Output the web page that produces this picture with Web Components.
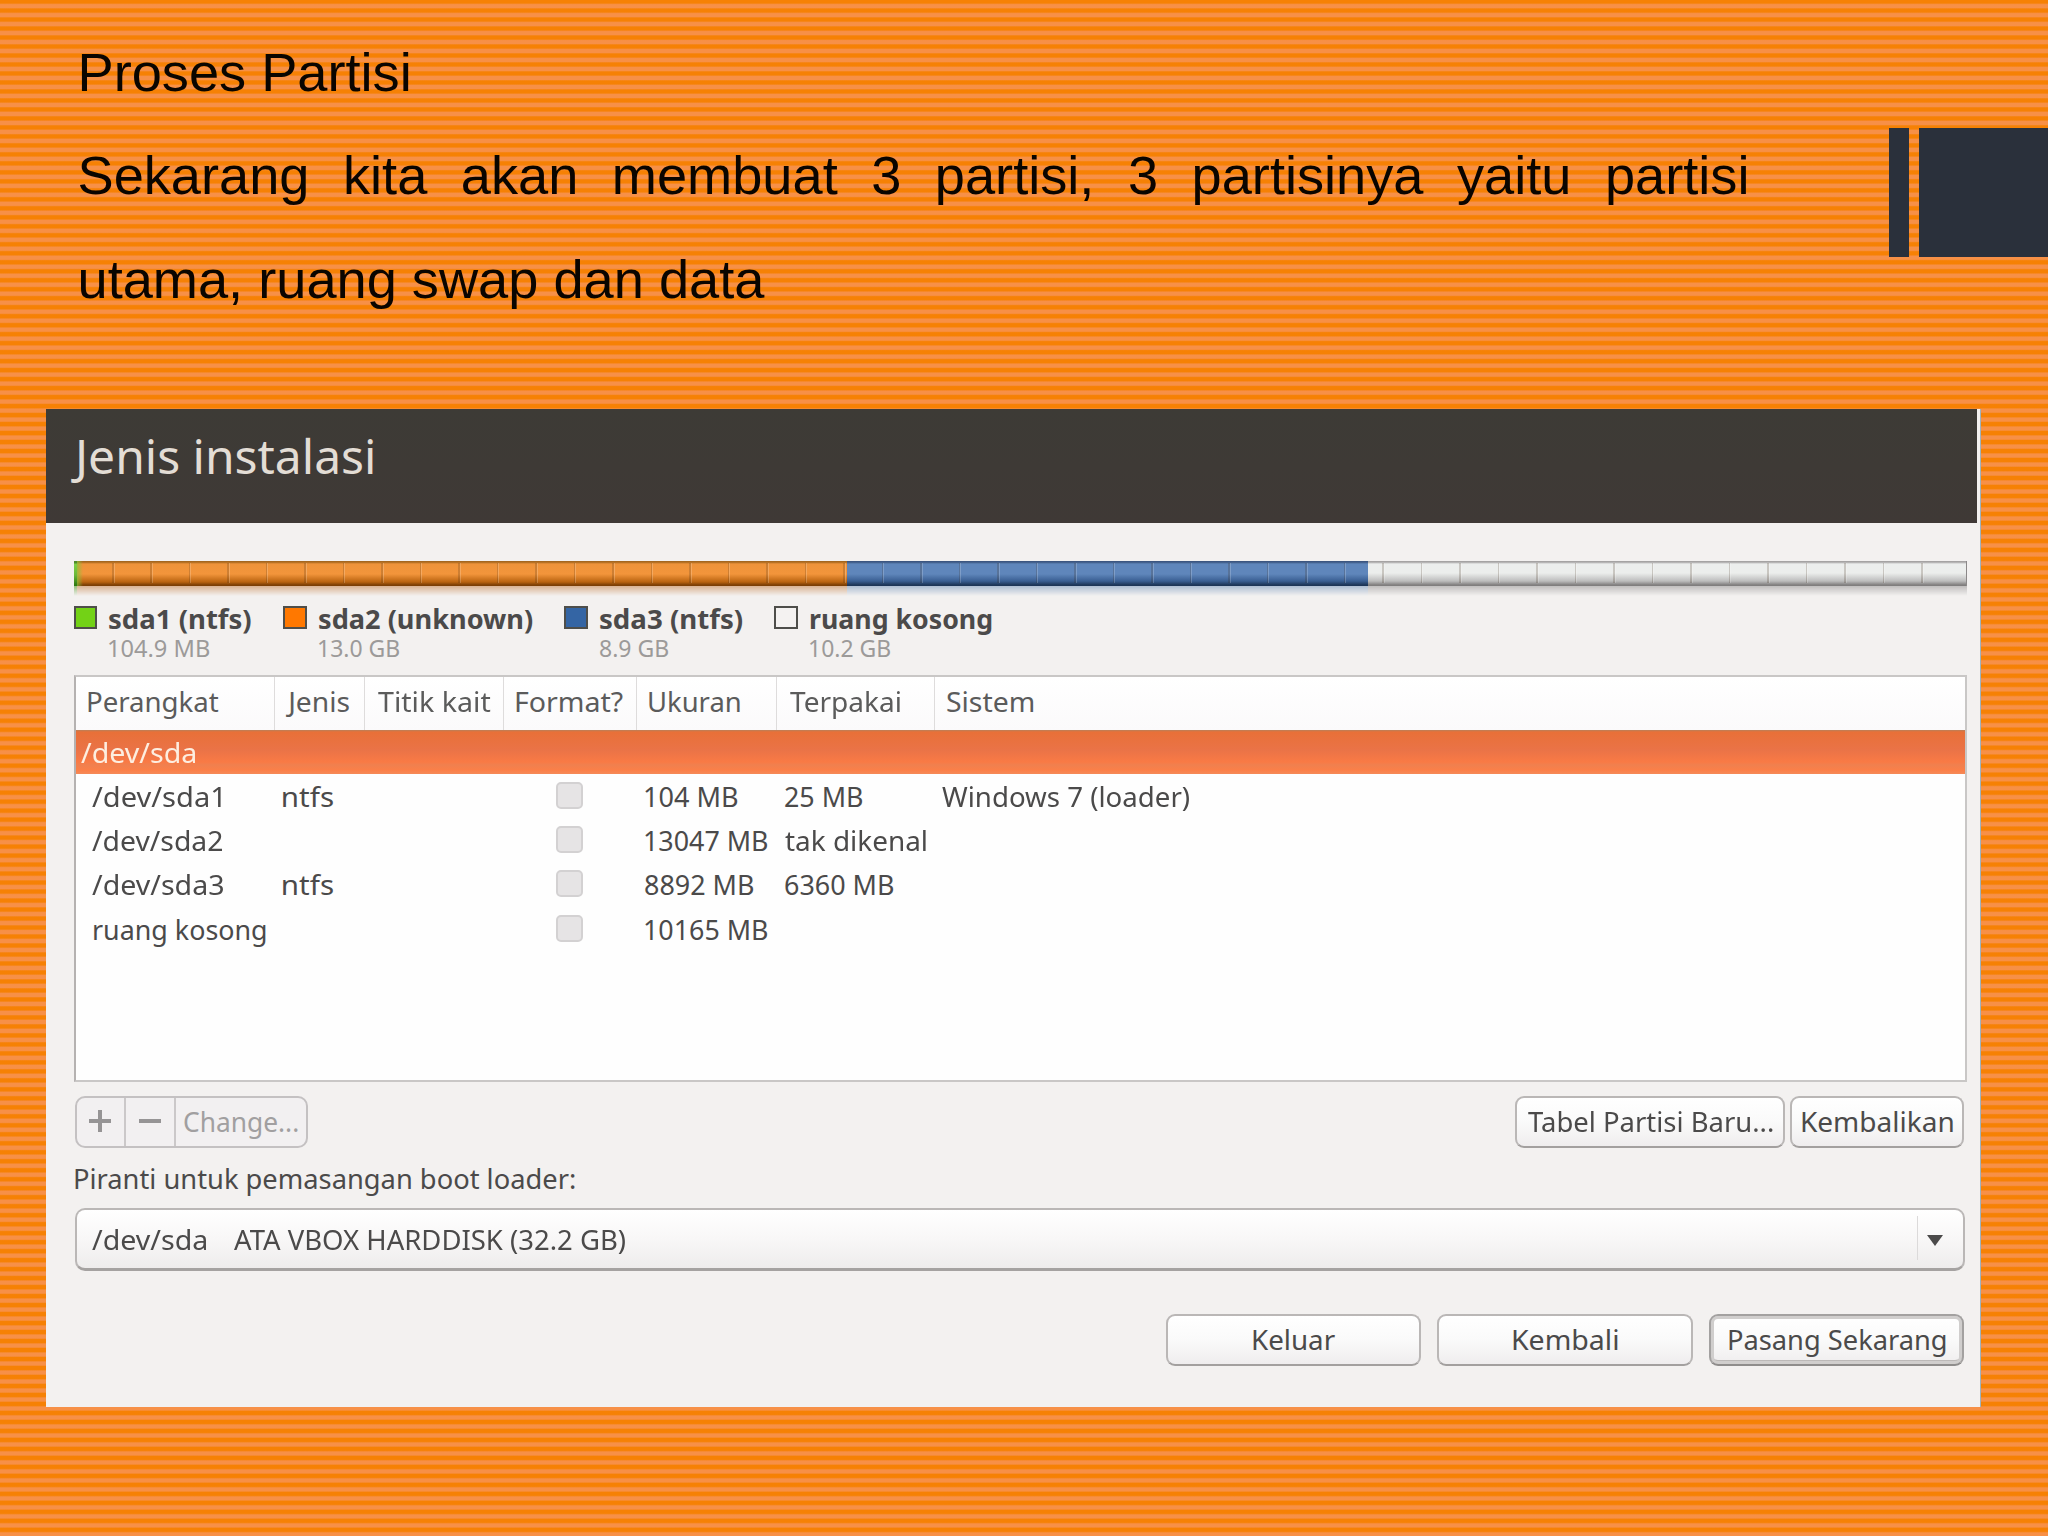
<!DOCTYPE html>
<html lang="id">
<head>
<meta charset="utf-8">
<title>Proses Partisi</title>
<style>
  html, body {
    margin: 0;
    height: 100%;
    overflow: hidden;
  }
</style>
</head>
<body>
<slide-page>
  <slide-text slot="text">
    <p>Proses Partisi</p>
    <p>Sekarang kita akan membuat 3 partisi, 3 partisinya yaitu partisi utama, ruang swap dan data</p>
  </slide-text>
  <installer-window></installer-window>
</slide-page>

<script>
class SlidePage extends HTMLElement {
  connectedCallback() {
    this.attachShadow({ mode: "open" }).innerHTML = `
      <style>
        :host {
          display: flex;
          flex-direction: column;
          box-sizing: border-box;
          width: 2048px;
          height: 1536px;
          overflow: hidden;
          background: repeating-linear-gradient(#f68104 0, #f68104 3px, #f79047 4.6px, #f79047 7.6px, #f68104 8.99px);
        }
        header {
          display: flex;
          justify-content: space-between;
          height: 409px;
        }
        .marks {
          display: flex;
          gap: 10px;
          margin-top: 128px;
          height: 128.5px;
        }
        .marks i { background: #2a303b; }
        .marks i:first-child { width: 20px; }
        .marks i:last-child { width: 129px; }
      </style>
      <header>
        <slot name="text"></slot>
        <div class="marks"><i></i><i></i></div>
      </header>
      <slot></slot>
    `;
  }
}

class SlideText extends HTMLElement {
  connectedCallback() {
    this.attachShadow({ mode: "open" }).innerHTML = `
      <style>
        :host {
          display: block;
          width: 1672px;
          margin-left: 77.5px;
          padding-top: 20.5px;
          font: 54.2px/103.6px "Liberation Sans", Arial, sans-serif;
          color: #0a0500;
          text-align: justify;
        }
        ::slotted(p) { margin: 0; }
      </style>
      <slot></slot>
    `;
  }
}

// One line of text, stretched so that its ink is exactly w pixels wide
class FitText extends HTMLElement {
  connectedCallback() {
    const w = Number(this.getAttribute("w"));
    this.attachShadow({ mode: "open" }).innerHTML = `
      <style>
        :host {
          display: block;
          flex: none;
          width: ${w}px;
          white-space: nowrap;
        }
        span {
          display: inline-block;
          transform-origin: 0 50%;
        }
      </style>
      <span><slot></slot></span>
    `;
    const cs = getComputedStyle(this);
    const ctx = document.createElement("canvas").getContext("2d");
    ctx.font = `${cs.fontWeight} ${cs.fontSize} ${cs.fontFamily}`;
    const m = ctx.measureText(this.textContent);
    const scale = w / (m.actualBoundingBoxLeft + m.actualBoundingBoxRight);
    this.shadowRoot.querySelector("span").style.transform =
      `translateX(${m.actualBoundingBoxLeft * scale}px) scaleX(${scale})`;
  }
}

class DiskBar extends HTMLElement {
  connectedCallback() {
    this.attachShadow({ mode: "open" }).innerHTML = `
      <style>
        :host {
          display: block;
          width: 1893px;
          height: 35px;
        }
        .bar, .glow {
          display: flex;
        }
        .bar {
          position: relative;
          height: 25px;
        }
        .glow {
          height: 10px;
          opacity: .6;
          -webkit-mask: linear-gradient(#000, transparent);
          mask: linear-gradient(#000, transparent);
        }
        i { box-sizing: border-box; }
        .a { width: 3px; }
        .b { width: 770px; }
        .c { width: 521.5px; }
        .d { flex: 1; }
        .bar .a { background: linear-gradient(#4f8a2c 2px, #7ed046 3px, #6cb83a 14px, #2f7a12 24px); }
        .bar .b { background: linear-gradient(90deg, rgba(126,200,60,.7), transparent 6px), linear-gradient(#a5671f 1px, #ee933a 3px, #f2953b 13px, #b9630f 21px, #7c3f05 24px); }
        .bar .c { background: linear-gradient(#3c5680 1px, #5f86bb 3px, #5f86bb 13px, #3a5f93 20px, #1d3557 24px); }
        .bar .d {
          background: linear-gradient(#a5a3a3 1px, #eceeed 3px, #eceeec 12px, #bdbdbd 20px, #807e7e 24px);
          border-right: 1.5px solid #8b8888;
        }
        .glow .a { background: #5aa032; }
        .glow .b { background: #c98b55; }
        .glow .c { background: #7f9cc0; }
        .glow .d { background: #a09e9e; }
        .ticks {
          position: absolute;
          inset: 2px 12px 3px 38.5px;
          background: repeating-linear-gradient(90deg, rgba(60,40,20,.2) 0 1.5px, rgba(255,255,255,.2) 1.5px 2.5px, transparent 2.5px 38.49px);
        }
      </style>
      <div class="bar"><i class="a"></i><i class="b"></i><i class="c"></i><i class="d"></i><div class="ticks"></div></div>
      <div class="glow"><i class="a"></i><i class="b"></i><i class="c"></i><i class="d"></i></div>
    `;
  }
}

class DiskLegend extends HTMLElement {
  connectedCallback() {
    this.attachShadow({ mode: "open" }).innerHTML = `
      <style>
        :host {
          display: flex;
          box-sizing: border-box;
          flex: none;
          width: ${this.getAttribute("span")}px;
        }
        i {
          box-sizing: border-box;
          width: 23.5px;
          height: 23.5px;
          margin: 9.5px 12px 0 0;
          border: 2px solid #4e4e4a;
          background: ${this.getAttribute("color")};
        }
        .name { font-weight: 700; line-height: 46px; height: 41px; }
        .size { font-size: 23.5px; line-height: 22px; color: #9c9a99; }
      </style>
      <i></i>
      <div>
        <div class="name"><slot name="name"></slot></div>
        <div class="size"><slot name="size"></slot></div>
      </div>
    `;
  }
}

class PartitionTable extends HTMLElement {
  connectedCallback() {
    const heads = [["Perangkat", 131], ["Jenis", 64], ["Titik kait", 113], ["Format?", 107.5], ["Ukuran", 91], ["Terpakai", 110], ["Sistem", 87]];
    const rows = [
      [["/dev/sda1", 129], ["ntfs", 50], ["104 MB", 93], ["25 MB", 78], ["Windows 7 (loader)", 248]],
      [["/dev/sda2", 131], null, ["13047 MB", 123], ["tak dikenal", 141], null],
      [["/dev/sda3", 131], ["ntfs", 50], ["8892 MB", 109], ["6360 MB", 109], null],
      [["ruang kosong", 172], null, ["10165 MB", 123], null, null]
    ];
    const text = (t) => t ? `<fit-text w="${t[1]}">${t[0]}</fit-text>` : "";
    this.attachShadow({ mode: "open" }).innerHTML = `
      <style>
        :host {
          display: block;
          box-sizing: border-box;
          width: 1893px;
          height: 407px;
          border: 2px solid #c9c7c6;
          border-left-color: #b5b2b1;
          background: #fefefe;
        }
        .row {
          display: grid;
          grid-template-columns: 199px 90.5px 138.5px 133px 140.5px 157.5px 1fr;
          height: 44.3px;
          line-height: 46px;
        }
        .head {
          height: 52.5px;
          line-height: 50px;
          color: #5b5b5b;
          background: linear-gradient(#fff, #fbfafb);
        }
        .head div {
          padding-left: 12.5px;
          border-right: 1.5px solid #dedcdc;
        }
        .head div:nth-child(2) { padding-left: 10.5px; }
        .head div:last-child { border: 0; }
        .sel {
          display: block;
          box-sizing: border-box;
          padding-left: 5px;
          line-height: 46px;
          color: #fdeee0;
          background: linear-gradient(#b8805a 0, #e87038 2px, #ea7347 20px, #f97a45 32px, #f0804f 35px, #fb7f48 40px, #f58a58);
        }
        .body div:nth-child(1) { padding-left: 16.5px; }
        .body div:nth-child(2) { padding-left: 8px; }
        .body div:nth-child(4) { padding: 8px 0 0 52.5px; }
        .body div:nth-child(5) { padding-left: 8px; }
        .body div:nth-child(6) { padding-left: 7.5px; }
        .body div:nth-child(7) { padding-left: 7.5px; }
        .row.last div:first-child { padding-left: 18.5px; }
        .check {
          display: block;
          box-sizing: border-box;
          width: 27px;
          height: 27px;
          border: 2px solid #d3d1d2;
          border-radius: 5px;
          background: #e6e4e5;
        }
      </style>
      <div class="row head">${heads.map((h) => `<div>${text(h)}</div>`).join("")}</div>
      <div class="row sel">${text(["/dev/sda", 114])}</div>
      ${rows.map(([dev, type, size, used, sys], i) => `
        <div class="row body${i === rows.length - 1 ? " last" : ""}">
          <div>${text(dev)}</div><div>${text(type)}</div><div></div>
          <div><i class="check"></i></div>
          <div>${text(size)}</div><div>${text(used)}</div><div>${text(sys)}</div>
        </div>`).join("")}
    `;
  }
}

class PushButton extends HTMLElement {
  connectedCallback() {
    this.attachShadow({ mode: "open" }).innerHTML = `
      <style>
        :host {
          display: flex;
          box-sizing: border-box;
          justify-content: center;
          width: ${this.getAttribute("span")}px;
          height: 52px;
          padding-left: 1.5px;
          line-height: 48.5px;
          border: 2px solid #bab7b6;
          border-bottom-color: #a3a09f;
          border-radius: 9px;
          background: linear-gradient(#fff, #fafafa 50%, #efedee);
        }
        :host([default]) {
          border-color: #a3a1a0;
          border-bottom-color: #8f8d8c;
          box-shadow: inset 0 0 0 3px #d0cecd, inset 0 -4px 0 #bcb9b8;
        }
      </style>
      <slot></slot>
    `;
  }
}

class EditGroup extends HTMLElement {
  connectedCallback() {
    this.attachShadow({ mode: "open" }).innerHTML = `
      <style>
        :host {
          display: flex;
          box-sizing: border-box;
          width: 233px;
          height: 52px;
          line-height: 48px;
          border: 2px solid #c4c1c2;
          border-radius: 10px;
          color: #a19fa0;
          background: #f2f0f1;
        }
        div {
          display: flex;
          box-sizing: border-box;
          align-items: center;
          justify-content: center;
          width: 49.5px;
          border-right: 2px solid #cbc8c9;
        }
        div.wide { flex: 1; border: 0; }
        div:first-child { width: 48px; }
        svg { stroke: #969495; stroke-width: 4; }
      </style>
      <div><svg width="22" height="24"><path d="M0 11h22M11 0v22"/></svg></div>
      <div><svg width="22" height="24"><path d="M0 11h22"/></svg></div>
      <div class="wide"><fit-text w="114">Change...</fit-text></div>
    `;
  }
}

class DeviceSelect extends HTMLElement {
  connectedCallback() {
    this.attachShadow({ mode: "open" }).innerHTML = `
      <style>
        :host {
          display: flex;
          box-sizing: border-box;
          width: 1890px;
          height: 63px;
          padding-left: 15px;
          gap: 28px;
          line-height: 60px;
          border: 2px solid #bab7b6;
          border-bottom: 3px solid #a5a2a1;
          border-radius: 10px;
          background: linear-gradient(#fff, #f8f7f7 50%, #eeecec);
        }
        .arrow {
          display: flex;
          align-items: center;
          margin: 6px 0 8px auto;
          padding: 4px 20px 0 9px;
          border-left: 1.5px solid #dcdada;
        }
      </style>
      <fit-text w="114">/dev/sda</fit-text>
      <fit-text w="392">ATA VBOX HARDDISK (32.2 GB)</fit-text>
      <div class="arrow"><svg width="16" height="11"><path d="M0 0h16l-8 11z" fill="#4b4a4a"/></svg></div>
    `;
  }
}

class InstallerWindow extends HTMLElement {
  connectedCallback() {
    this.attachShadow({ mode: "open" }).innerHTML = `
      <style>
        :host {
          display: flex;
          flex-direction: column;
          box-sizing: border-box;
          flex: none;
          width: 1935px;
          height: 997.5px;
          margin-left: 46px;
          border-right: 1px solid #9fb3bd;
          background: #f3f1f0;
          font: 27px "Noto Sans", "Open Sans", sans-serif;
          color: #4b4a4a;
        }
        h1 {
          box-sizing: border-box;
          height: 113.5px;
          margin: 0 3px 0 0;
          padding-left: 24.5px;
          font-size: 48px;
          font-weight: 400;
          line-height: 93px;
          color: #e3ddd5;
          background: linear-gradient(#3d3b36, #3f3936);
        }
        main {
          display: flex;
          flex-direction: column;
          padding: 38.5px 0 0 27.5px;
        }
        .legend { display: flex; height: 79px; }
        .tools {
          display: flex;
          margin: 14px 16px 0 1px;
          gap: 5.5px;
        }
        edit-group { margin-right: auto; }
        .label { height: 60px; padding-left: 1px; line-height: 61px; }
        device-select { margin-left: 1px; }
        .actions {
          display: flex;
          justify-content: flex-end;
          gap: 16px;
          margin: 42.5px 16px 0 0;
        }
      </style>
      <h1><fit-text w="302">Jenis instalasi</fit-text></h1>
      <main>
        <disk-bar></disk-bar>
        <div class="legend">
          <disk-legend span="209.5" color="#73d216">
            <fit-text slot="name" w="142.5">sda1 (ntfs)</fit-text>
            <fit-text slot="size" w="100">104.9 MB</fit-text>
          </disk-legend>
          <disk-legend span="281" color="#ff7800">
            <fit-text slot="name" w="214">sda2 (unknown)</fit-text>
            <fit-text slot="size" w="80">13.0 GB</fit-text>
          </disk-legend>
          <disk-legend span="210" color="#3465a4">
            <fit-text slot="name" w="143">sda3 (ntfs)</fit-text>
            <fit-text slot="size" w="68">8.9 GB</fit-text>
          </disk-legend>
          <disk-legend span="240" color="#f4f2f1">
            <fit-text slot="name" w="182">ruang kosong</fit-text>
            <fit-text slot="size" w="80">10.2 GB</fit-text>
          </disk-legend>
        </div>
        <partition-table></partition-table>
        <div class="tools">
          <edit-group></edit-group>
          <push-button span="270"><fit-text w="245">Tabel Partisi Baru...</fit-text></push-button>
          <push-button span="174"><fit-text w="151">Kembalikan</fit-text></push-button>
        </div>
        <div class="label"><fit-text w="500">Piranti untuk pemasangan boot loader:</fit-text></div>
        <device-select></device-select>
        <div class="actions">
          <push-button span="255.5"><fit-text w="82">Keluar</fit-text></push-button>
          <push-button span="255.5"><fit-text w="104.5">Kembali</fit-text></push-button>
          <push-button span="255.5" default><fit-text w="217">Pasang Sekarang</fit-text></push-button>
        </div>
      </main>
    `;
  }
}

customElements.define("fit-text", FitText);
customElements.define("disk-bar", DiskBar);
customElements.define("disk-legend", DiskLegend);
customElements.define("partition-table", PartitionTable);
customElements.define("push-button", PushButton);
customElements.define("edit-group", EditGroup);
customElements.define("device-select", DeviceSelect);
customElements.define("installer-window", InstallerWindow);
customElements.define("slide-text", SlideText);
customElements.define("slide-page", SlidePage);
</script>
</body>
</html>
